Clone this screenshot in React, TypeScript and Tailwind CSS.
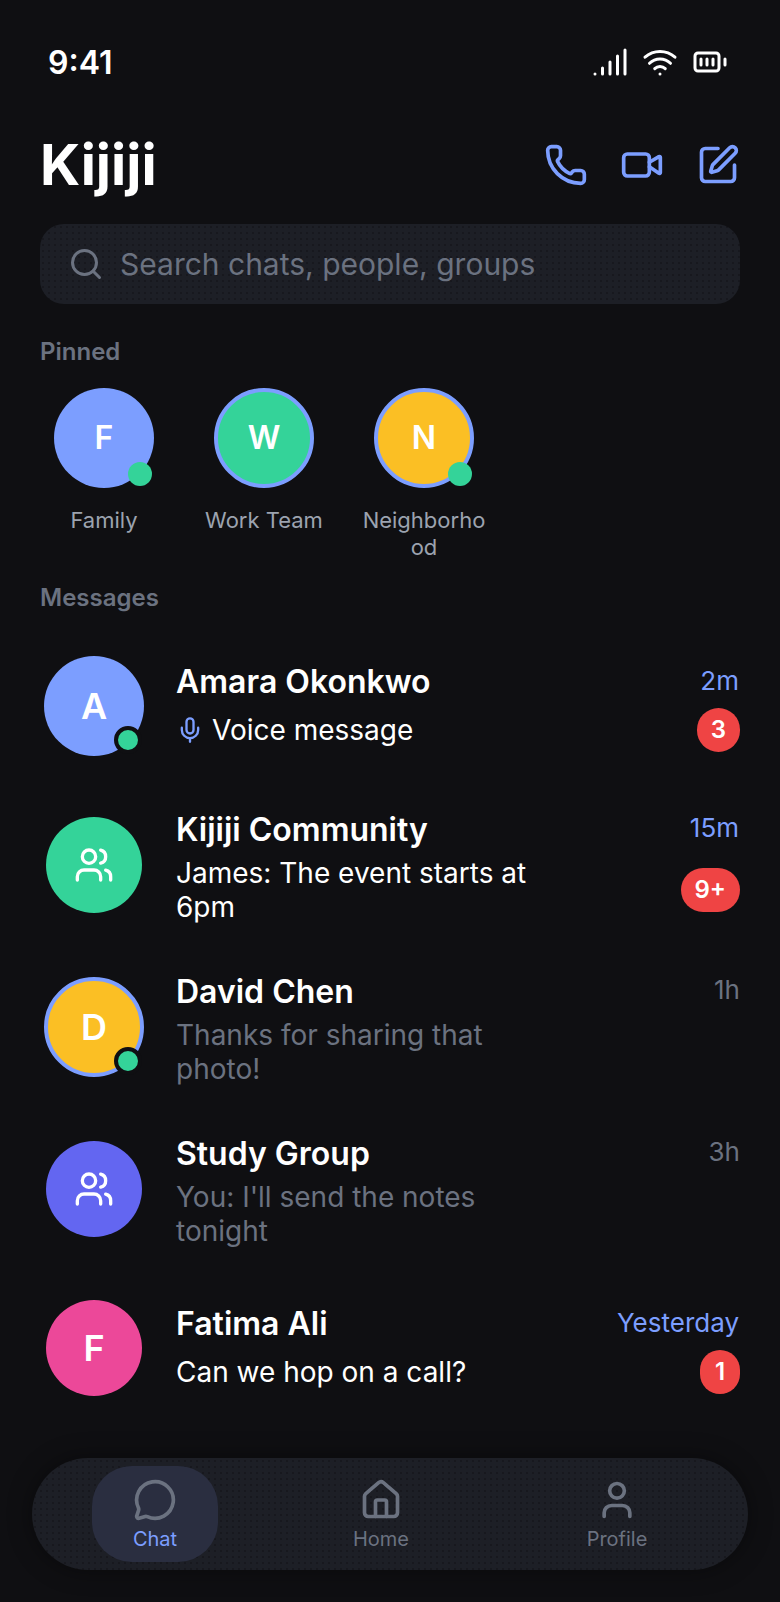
import { BatteryFull, House, Mic, MessageCircle, Phone, Search, Signal, SquarePen, User, Users, Video, Wifi } from "lucide-react";

interface Pin {
  letter: string;
  name: string;
  color: string;
  ring: boolean;
  online: boolean;
}

interface Chat {
  name: string;
  preview: string;
  time: string;
  avatar: string;
  rowHeight: string;
  letter?: string;
  badge?: string;
  unread: boolean;
  mic?: boolean;
  big?: boolean;
  ring?: boolean;
  online?: boolean;
}

const pins: Pin[] = [
  { letter: "F", name: "Family", color: "bg-[#7c9eff]", ring: false, online: true },
  { letter: "W", name: "Work Team", color: "bg-[#34d399]", ring: true, online: false },
  { letter: "N", name: "Neighborhood", color: "bg-[#fbbf24]", ring: true, online: true },
];

const chats: Chat[] = [
  { name: "Amara Okonkwo", preview: "Voice message", time: "2m", avatar: "bg-[#7c9eff]", rowHeight: "min-h-[113px]", letter: "A", badge: "3", unread: true, mic: true, big: true, online: true },
  { name: "Kijiji Community", preview: "James: The event starts at 6pm", time: "15m", avatar: "bg-[#34d399]", rowHeight: "min-h-[118px]", badge: "9+", unread: true },
  { name: "David Chen", preview: "Thanks for sharing that photo!", time: "1h", avatar: "bg-[#fbbf24]", rowHeight: "min-h-[118px]", letter: "D", unread: false, big: true, ring: true, online: true },
  { name: "Study Group", preview: "You: I'll send the notes tonight", time: "3h", avatar: "bg-[#6366f1]", rowHeight: "min-h-[118px]", unread: false },
  { name: "Fatima Ali", preview: "Can we hop on a call?", time: "Yesterday", avatar: "bg-[#ec4899]", rowHeight: "min-h-[111px]", letter: "F", badge: "1", unread: true },
];

const ChatRow = ({ chat }: { chat: Chat }) => (
  <div className={`flex items-center ${chat.rowHeight}`}>
    <div className="flex w-[108px] shrink-0 justify-center">
      <div
        className={`relative flex items-center justify-center rounded-full ${chat.avatar} ${chat.big ? "size-[100px]" : "size-[96px]"} ${chat.ring ? "border-4 border-[#7c9eff]" : ""}`}
      >
        {chat.letter ? (
          <span className="text-[36px] font-semibold text-white">{chat.letter}</span>
        ) : (
          <Users size={40} className="text-white" />
        )}
        {chat.online && (
          <span className={`absolute size-[28px] rounded-full border-4 border-[#0f0f12] bg-[#34d399] ${chat.ring ? "right-[-2px] bottom-[-2px]" : "right-[2px] bottom-[2px]"}`} />
        )}
      </div>
    </div>
    <div className="ml-[28px] min-w-0 flex-1 pt-[4px]">
      <div className="flex h-[38px] items-center justify-between">
        <span className="text-[32px] font-semibold text-white">{chat.name}</span>
        <span className={`mb-[4px] text-[26px] ${chat.unread ? "pr-[1px] text-[#7c9eff]" : "text-[#6b7280]"}`}>{chat.time}</span>
      </div>
      <div className="mt-[7px] flex min-h-[44px] items-center justify-between">
        <div className={`flex w-[370px] items-center text-[28px] leading-[34px] ${chat.unread ? "text-white" : "text-[#6b7280]"}`}>
          {chat.mic && <Mic size={28} className="mr-[8px] shrink-0 text-[#7c9eff]" />}
          <span>{chat.preview}</span>
        </div>
        {chat.badge && (
          <span className="flex h-[44px] min-w-[40px] items-center justify-center rounded-full bg-[#ef4444] px-[14px] text-[24px] font-semibold text-white">
            {chat.badge}
          </span>
        )}
      </div>
    </div>
  </div>
);

const NavItem = ({ label, active, children }: { label: string; active?: boolean; children: React.ReactNode }) => (
  <div
    className={`flex h-[96px] w-[126px] flex-col items-center justify-center rounded-[40px] ${active ? "bg-[#2a2e40]" : ""}`}
  >
    {children}
    <span className={`mt-[5px] text-[20px] leading-[24px] ${active ? "text-[#7c9eff]" : "text-[#6b7280]"}`}>{label}</span>
  </div>
);

export default function App() {
  return (
    <div className="flex h-[1602px] w-[780px] flex-col bg-[#0f0f12] font-['Inter',sans-serif]">
      {/* status bar */}
      <div className="flex items-center justify-between pt-[43px] pr-[52px] pl-[48px]">
        <span className="text-[32px] leading-[40px] font-semibold text-white">9:41</span>
        <div className="-mt-[2px] flex items-center gap-[14px] text-white">
          <Signal size={36} />
          <Wifi size={36} />
          <BatteryFull size={36} />
        </div>
      </div>

      <div className="mt-[52px] flex items-center justify-between px-[40px]">
        <h1 className="text-[56px] leading-[60px] font-bold text-white">Kijiji</h1>
        <div className="flex items-center gap-[32px] text-[#7c9eff]">
          <Phone size={44} />
          <Video size={44} />
          <SquarePen size={44} />
        </div>
      </div>

      <div className="mx-[40px] mt-[29px] flex h-[80px] items-center rounded-[24px] bg-[#1d1f26] bg-[radial-gradient(circle,#17181e_0.7px,transparent_0.9px)] bg-[length:6px_6px] px-[28px]">
        <Search size={36} className="shrink-0 text-[#6b7280]" />
        <span className="ml-[16px] text-[30px] text-[#6b7280]">Search chats, people, groups</span>
      </div>

      <div className="mt-[33px] px-[40px] text-[24px] leading-[30px] font-semibold text-[#6b7280]">Pinned</div>
      <div className="mt-[21px] flex gap-[36px] pl-[42px]">
        {pins.map((pin) => (
          <div key={pin.name} className="flex w-[124px] flex-col items-center">
            <div
              className={`relative flex size-[100px] items-center justify-center rounded-full ${pin.color} ${pin.ring ? "border-4 border-[#7c9eff]" : ""}`}
            >
              <span className="text-[32px] font-semibold text-white">{pin.letter}</span>
              {pin.online && (
                <span className={`absolute size-[24px] rounded-full bg-[#34d399] ${pin.ring ? "right-[-2px] bottom-[-2px]" : "right-[2px] bottom-[2px]"}`} />
              )}
            </div>
            <span className="mt-[19px] w-full text-center text-[22px] leading-[27px] break-words text-[#9ca3af]">{pin.name}</span>
          </div>
        ))}
      </div>

      <div className="mt-[22px] px-[40px] text-[24px] leading-[30px] font-semibold text-[#6b7280]">Messages</div>

      <div className="flex min-h-0 flex-1 flex-col gap-[44px] px-[40px] pt-[36px]">
        {chats.map((chat) => (
          <ChatRow key={chat.name} chat={chat} />
        ))}
      </div>

      {/* bottom nav */}
      <div className="mx-[32px] mb-[32px] flex h-[112px] items-center rounded-[56px] bg-[#1d1f26] bg-[radial-gradient(circle,#17181e_0.7px,transparent_0.9px)] bg-[length:6px_6px] pl-[60px] shadow-[0_0_24px_rgba(0,0,0,0.4)]">
        <NavItem label="Chat" active>
          <MessageCircle size={44} className="text-[#6b7280]" />
        </NavItem>
        <div className="ml-[100px]">
          <NavItem label="Home">
            <House size={44} className="text-[#6b7280]" />
          </NavItem>
        </div>
        <div className="ml-[110px]">
          <NavItem label="Profile">
            <User size={44} className="text-[#6b7280]" />
          </NavItem>
        </div>
      </div>
    </div>
  );
}
